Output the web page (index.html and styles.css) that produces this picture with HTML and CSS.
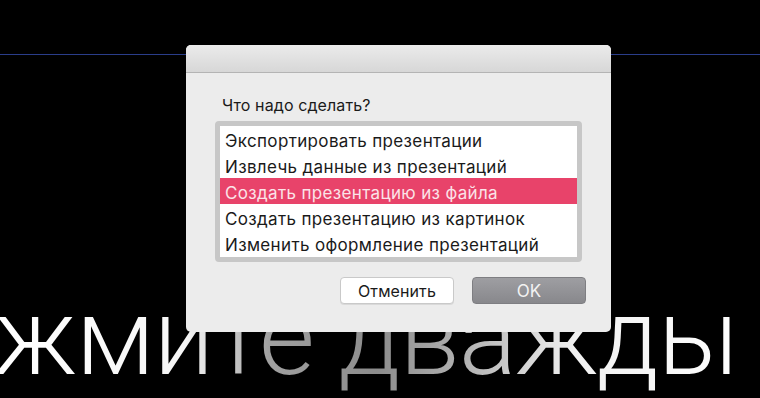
FILE: index.html
```html
<!DOCTYPE html>
<html lang="ru">
<head>
<meta charset="utf-8">
<title>Что надо сделать?</title>
<link rel="stylesheet" href="styles.css">
</head>
<body>
<div class="stage">
  <div class="rule"></div>
  <div class="hero">жмите дважды</div>
  <div class="dialog">
    <div class="titlebar"></div>
    <div class="content">
      <div class="prompt">Что надо сделать?</div>
      <div class="listbox">
        <div class="item">Экспортировать презентации</div>
        <div class="item">Извлечь данные из презентаций</div>
        <div class="item selected">Создать презентацию из файла</div>
        <div class="item">Создать презентацию из картинок</div>
        <div class="item">Изменить оформление презентаций</div>
      </div>
      <div class="buttons">
        <button class="btn cancel">Отменить</button>
        <button class="btn ok">OK</button>
      </div>
    </div>
  </div>
</div>
</body>
</html>
```

FILE: styles.css
```css
html, body {
  margin: 0;
  padding: 0;
  background: #000;
}
.stage {
  position: relative;
  width: 760px;
  height: 398px;
  overflow: hidden;
  background: #000;
  display: flex;
  flex-direction: column;
}
.rule {
  margin-top: 54px;
  height: 1px;
  background: #2a3d8a;
}
.hero {
  margin-top: 222px;
  margin-left: -6px;
  font-family: "Roboto", "Liberation Sans", sans-serif;
  font-weight: 300;
  font-size: 108px;
  line-height: 120px;
  white-space: nowrap;
  letter-spacing: -1.2px;
  background: linear-gradient(90deg, #ffffff 0%, #f6f6f6 25%, #a0a0a0 36%, #8c8c8c 50%, #b4b4b4 62%, #f2f2f2 76%, #ffffff 100%);
  -webkit-background-clip: text;
  background-clip: text;
  color: transparent;
}
.dialog {
  position: absolute;
  left: 186px;
  top: 45px;
  width: 425px;
  height: 287px;
  background: #ececec;
  border-radius: 5px;
  overflow: hidden;
  display: flex;
  flex-direction: column;
  font-family: "Inter", "Liberation Sans", sans-serif;
  color: #1a1a1a;
}
.titlebar {
  height: 27px;
  background: linear-gradient(#ebebeb, #d7d7d7);
  border-bottom: 1px solid #b4b4b4;
}
.content {
  display: flex;
  flex-direction: column;
  padding: 22px 25px 0 29px;
}
.prompt {
  font-size: 16px;
  line-height: 21px;
  letter-spacing: 0.1px;
  padding-left: 7px;
}
.listbox {
  margin-top: 5px;
  width: 357px;
  border: 5px solid #c7c7c7;
  border-radius: 4px;
  background: #fff;
  padding-bottom: 1px;
}
.item {
  height: 26px;
  box-sizing: border-box;
  padding: 5px 0 0 5px;
  font-size: 17px;
  line-height: 21px;
  letter-spacing: 0.35px;
  white-space: nowrap;
}
.item.selected {
  background: #e8436a;
  color: #fbe3e8;
}
.buttons {
  display: flex;
  justify-content: flex-end;
  gap: 18px;
  margin-top: 15px;
}
.btn {
  width: 114px;
  height: 27px;
  border-radius: 4px;
  font-family: "Inter", "Liberation Sans", sans-serif;
  font-size: 16px;
  letter-spacing: 0.1px;
  padding: 0;
}
.cancel {
  background: #fff;
  color: #1a1a1a;
  border: 1px solid #c9c9c9;
  box-shadow: 0 1px 0 rgba(0,0,0,0.08);
}
.ok {
  background: linear-gradient(#9e9ea2, #88888c);
  color: #f2f2f2;
  border: 1px solid #7e7e82;
  font-size: 17px;
}
```
